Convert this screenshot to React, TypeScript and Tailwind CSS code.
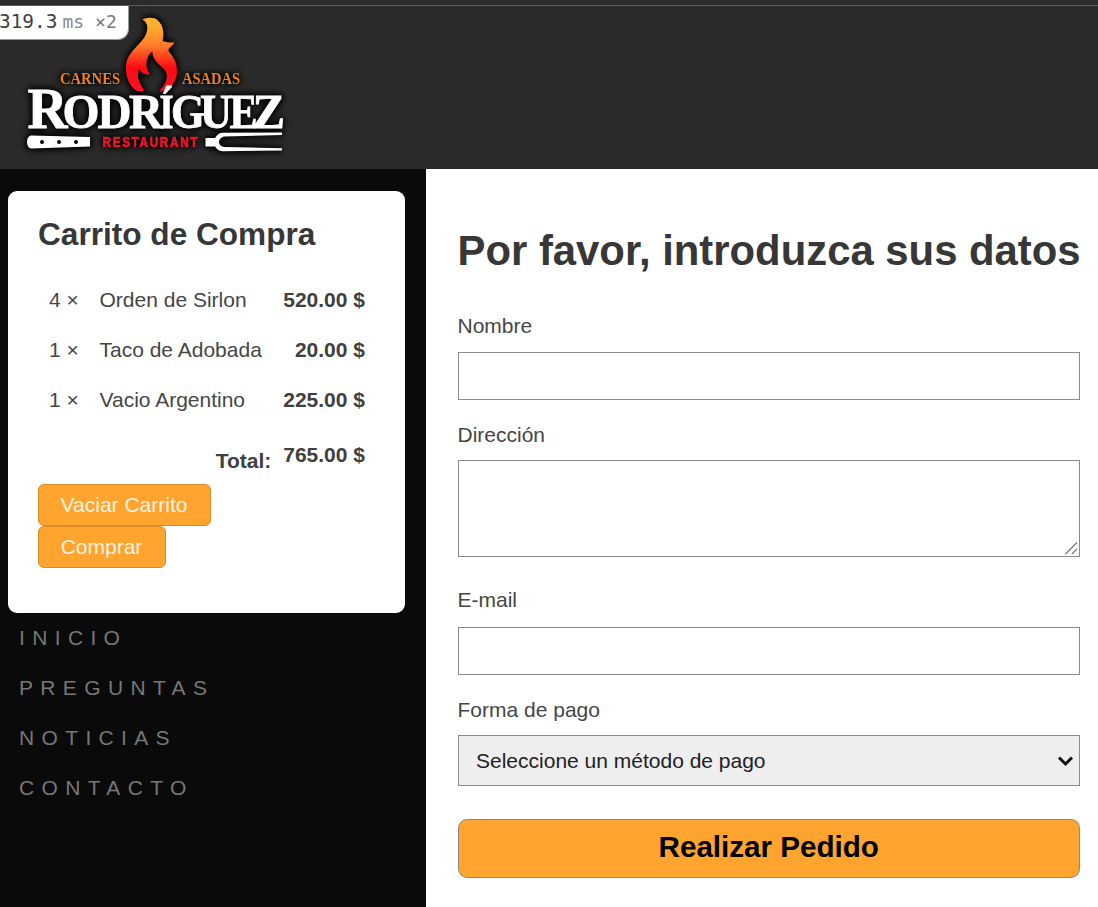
import React from "react";

const items = [
  { qty: 4, name: "Orden de Sirlon", price: "520.00 $" },
  { qty: 1, name: "Taco de Adobada", price: "20.00 $" },
  { qty: 1, name: "Vacio Argentino", price: "225.00 $" },
];

const links = ["INICIO", "PREGUNTAS", "NOTICIAS", "CONTACTO"];

const brandLetters = [
  { char: "R", x: 27.5, width: 40, size: 56 },
  { char: "O", x: 62.5, width: 37, size: 48 },
  { char: "D", x: 97.5, width: 34, size: 48 },
  { char: "R", x: 129, width: 34, size: 48 },
  { char: "Í", x: 159.5, width: 14, size: 48 },
  { char: "G", x: 171, width: 34, size: 48 },
  { char: "U", x: 200, width: 32, size: 48 },
  { char: "E", x: 229.5, width: 28, size: 48 },
  { char: "Z", x: 252.5, width: 32.5, size: 48 },
];

function Logo() {
  return (
    <svg
      width="300"
      height="160"
      viewBox="0 0 300 160"
      className="block"
      style={{ filter: "drop-shadow(0 0 3px #000) drop-shadow(0 0 3px #000)" }}
    >
      <defs>
        <linearGradient id="fire" x1="0" y1="0" x2="0" y2="1">
          <stop offset="0.1" stopColor="#ffb030" />
          <stop offset="0.38" stopColor="#ff7a28" />
          <stop offset="0.68" stopColor="#ff0a14" />
          <stop offset="1" stopColor="#ff1020" />
        </linearGradient>
      </defs>
      <path
        transform="scale(0.3333)"
        fill="url(#fire)"
        d="M427 58C440 52 455 52 464 55C486 66 495 92 488 123C502 127 514 129 523 127C519 138 506 143 505 152C512 163 530 178 531 210C532 244 512 272 478 273C489 262 504 243 500 222C496 201 457 190 457 154C437 169 433 202 450 223C439 226 424 219 417 208C410 226 414 246 432 269C430 275 418 276 410 272C387 257 377 230 378 200C380 146 443 129 442 82C441 70 436 63 427 58Z"
      />
      <g fontFamily="Liberation Serif, serif" fontWeight="700" fontSize="16" fill="#ef7d22">
        <text x="60" y="83.500" textLength="60" lengthAdjust="spacingAndGlyphs">CARNES</text>
        <text x="182" y="83.500" textLength="58" lengthAdjust="spacingAndGlyphs">ASADAS</text>
      </g>
      <text y="128" fontFamily="Liberation Serif, serif" fontWeight="700" fill="#fff" stroke="#fff" strokeWidth="0.8">
        {brandLetters.map((l) => (
          <tspan key={l.x} x={l.x} fontSize={l.size} textLength={l.width} lengthAdjust="spacingAndGlyphs">
            {l.char}
          </tspan>
        ))}
      </text>
      <text
        transform="translate(102.5 147) scale(0.76 1)"
        textLength="125"
        lengthAdjust="spacing"
        fontFamily="Liberation Sans, sans-serif"
        fontWeight="700"
        fontSize="15.500"
        fill="#f5132b"
        stroke="#f5132b"
        strokeWidth="0.7"
      >
        RESTAURANT
      </text>
      <path
        fill="#fff"
        fillRule="evenodd"
        d="M31 135.500L90 137V146.500L31 148.500Q27 147.500 27 142Q27 136.500 31 135.500ZM40 142a2 2 0 1 0 4 0a2 2 0 1 0-4 0M57 142a2 2 0 1 0 4 0a2 2 0 1 0-4 0M74 142a2 2 0 1 0 4 0a2 2 0 1 0-4 0"
      />
      <path
        fill="#fff"
        d="M205.500 138H215Q218 132.800 223 132.800L282 132.500V135L224 136.500Q219 138 219 142Q219 146 224 147L282 148.200V150.500L222 151.200Q218 151 215 146.500H205.500Z"
      />
    </svg>
  );
}

const labelClass = "block h-6 text-[21px] leading-6 text-[#464646]";
const fieldClass = "block w-full border border-[#8b8b8b] bg-white outline-none";

export default function App() {
  return (
    <div className="flex h-[907px] w-[1098px] flex-col overflow-hidden bg-white font-['Liberation_Sans',Arial,sans-serif] text-[#3c3c3c]">
      <header className="relative h-[169px] shrink-0 bg-[#2b2b2b]">
        <div className="absolute inset-x-0 top-[5px] h-px bg-[#5c5c5c]" />
        <Logo />
        <div className="absolute top-[6px] left-0 flex h-[34px] w-[129px] items-baseline overflow-hidden rounded-br-[11px] border-r border-b border-[#999] bg-white font-['DejaVu_Sans_Mono',monospace] leading-[32px]">
          <span className="-ml-px text-[19.400px] text-[#414141]">319.3</span>
          <span className="ml-[5px] text-[18px] text-[#888]">ms</span>
          <span className="ml-[11px] text-[18px] text-[#777]">×2</span>
        </div>
      </header>

      <div className="flex flex-1">
        <aside className="w-[425.500px] shrink-0 bg-[#0a0a0a] pt-[21.500px] pl-[8px]">
          <section className="h-[422.500px] w-[396.500px] rounded-[9px] bg-white pt-[25px] pr-[39.500px] pl-[30px]">
            <h2 className="h-9 text-[31.600px] leading-9 font-bold text-[#373737]">Carrito de Compra</h2>
            <ul className="mt-[23px]">
              {items.map((item) => (
                <li key={item.name} className="flex h-[50px] items-center pl-[11px] text-[21px] leading-6 text-[#464646]">
                  <span className="w-[50.500px]">{item.qty} ×</span>
                  <span>{item.name}</span>
                  <span className="ml-auto font-bold text-[#404040]">{item.price}</span>
                </li>
              ))}
            </ul>
            <div className="flex h-[59.500px] items-start justify-end text-[21px] leading-6 font-bold text-[#404040]">
              <span className="mr-3 pt-[24px]">Total:</span>
              <span className="pt-[18px]">765.00 $</span>
            </div>
            <div className="-ml-[0.500px] flex flex-col items-start">
              <button className="h-[42px] w-[173px] rounded-[6px] border border-[#d98b2a] bg-[#ffa42f] pb-px text-[21px] text-[#fff3e0]">Vaciar Carrito</button>
              <button className="h-[42px] w-[128px] rounded-[6px] border border-[#d98b2a] bg-[#ffa42f] pb-px text-[21px] text-[#fff3e0]">Comprar</button>
            </div>
          </section>
          <nav className="flex flex-col pl-[11px]">
            {links.map((link) => (
              <a key={link} href="#" className="h-[50px] text-[21px] leading-[50px] tracking-[7.350px] text-[#777]">
                {link}
              </a>
            ))}
          </nav>
        </aside>

        <main className="w-[654.500px] pt-[58px] pl-[32px]">
          <form>
            <h1 className="h-12 text-[41.850px] leading-12 font-bold whitespace-nowrap text-[#373737]">Por favor, introduzca sus datos</h1>
            <label className={labelClass + " mt-[39px]"}>Nombre</label>
            <input className={fieldClass + " mt-[13.500px] h-[48.500px]"} />
            <label className={labelClass + " mt-[22.500px]"}>Dirección</label>
            <div className="relative mt-[13px] h-[97px]">
              <textarea className={fieldClass + " h-[97px] resize-none"} />
              <svg className="absolute right-[2px] bottom-[2px]" width="13" height="13" viewBox="0 0 13 13" fill="none" stroke="#777" strokeWidth="1.200">
                <path d="M0.500 12L12 0.500M7 12L12 7" />
              </svg>
            </div>
            <label className={labelClass + " mt-[31px]"}>E-mail</label>
            <input className={fieldClass + " mt-[15px] h-[48px]"} />
            <label className={labelClass + " mt-[23px]"}>Forma de pago</label>
            <div className="relative mt-[13px]">
              <select className="block h-[51.500px] w-full appearance-none border border-[#8b8b8b] bg-[#eee] pt-px pl-[17.500px] text-[21px] text-[#222]">
                <option>Seleccione un método de pago</option>
              </select>
              <svg className="absolute top-[20px] right-[6px]" width="17" height="13" viewBox="0 0 17 13" fill="none" stroke="#111" strokeWidth="3">
                <path d="M2 2.500L8.500 9L15 2.500" />
              </svg>
            </div>
            <button type="button" className="mt-[32.500px] block h-[59.500px] w-full rounded-[9px] border border-[#8b8b8b] bg-[#ffa42f] pb-[3px] text-[29.600px] font-bold text-black">
              Realizar Pedido
            </button>
          </form>
        </main>
      </div>
    </div>
  );
}
